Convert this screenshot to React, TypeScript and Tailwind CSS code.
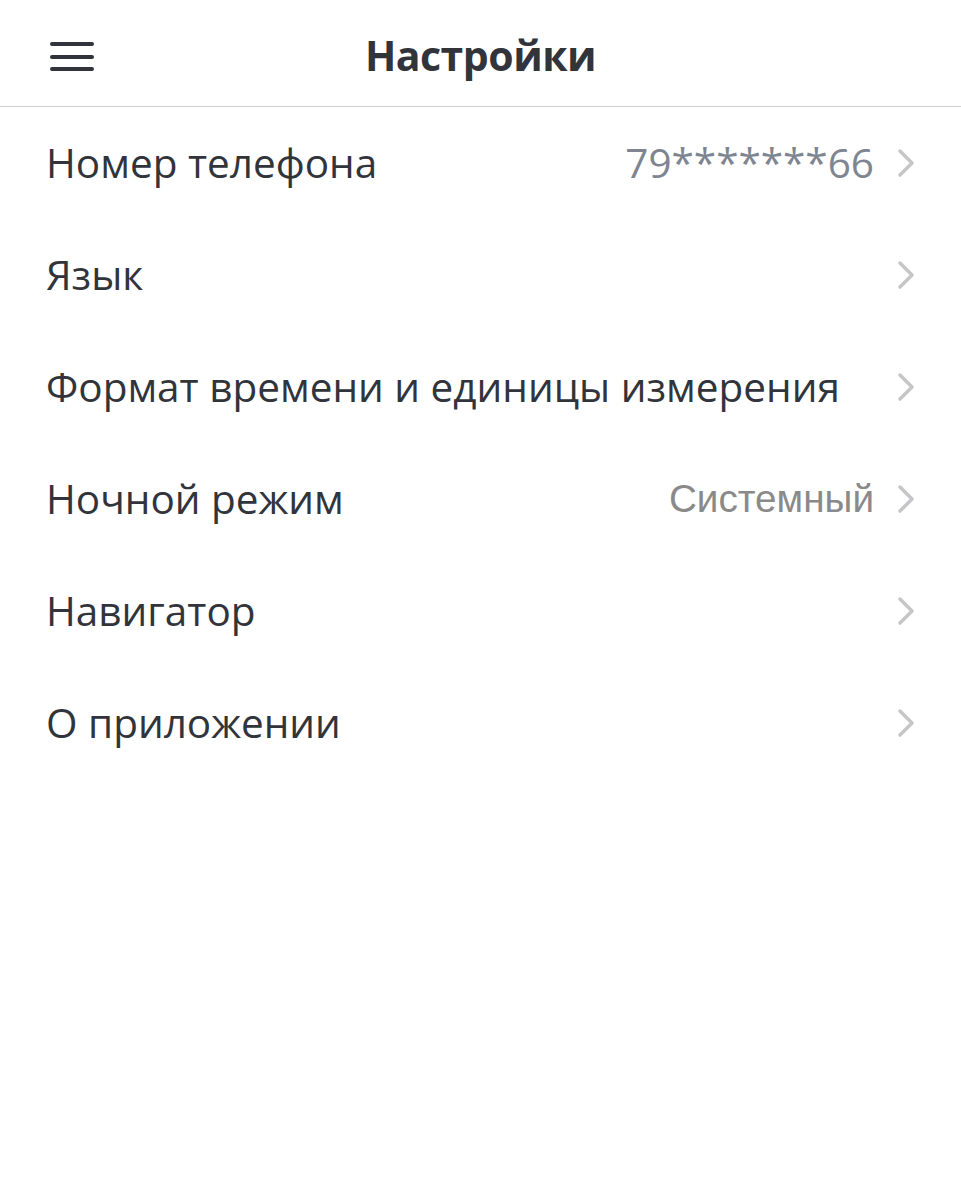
const rows: { label: string; value?: string; valueClass?: string }[] = [
  { label: "Номер телефона", value: "79*******66", valueClass: "text-[#7e8591]" },
  { label: "Язык" },
  { label: "Формат времени и единицы измерения" },
  { label: "Ночной режим", value: "Системный", valueClass: "text-[#8a8a8a] font-['Liberation_Sans',sans-serif] text-[38.7px]" },
  { label: "Навигатор" },
  { label: "О приложении" },
];

function Chevron() {
  return (
    <svg width="20" height="30" viewBox="0 0 20 30" fill="none" className="shrink-0">
      <path d="M4 3l12 12L4 27" stroke="#c6c6c8" strokeWidth="3.5" strokeLinecap="round" strokeLinejoin="round" />
    </svg>
  );
}

export default function App() {
  return (
    <div className="min-h-[1200px] bg-white font-['Open_Sans',sans-serif] text-[#31343b]">
      <header className="relative flex h-[107px] items-center justify-center border-b-[1.5px] border-[#cfcfd1] pt-[6px]">
        <button className="absolute left-[50px] top-[42px] flex w-[44px] flex-col gap-[8.5px]">
          <span className="h-[4px] rounded-full bg-[#31343b]" />
          <span className="h-[4px] rounded-full bg-[#31343b]" />
          <span className="h-[4px] rounded-full bg-[#31343b]" />
        </button>
        <h1 className="text-[41px] font-bold tracking-[-0.5px]">Настройки</h1>
      </header>
      <ul>
        {rows.map((r) => (
          <li key={r.label} className="flex h-[112px] items-center pl-[46px] pr-[45px] text-[40.5px]">
            <span className="flex-1 leading-none">{r.label}</span>
            {r.value && <span className={`mr-[22px] leading-none ${r.valueClass}`}>{r.value}</span>}
            <Chevron />
          </li>
        ))}
      </ul>
    </div>
  );
}
